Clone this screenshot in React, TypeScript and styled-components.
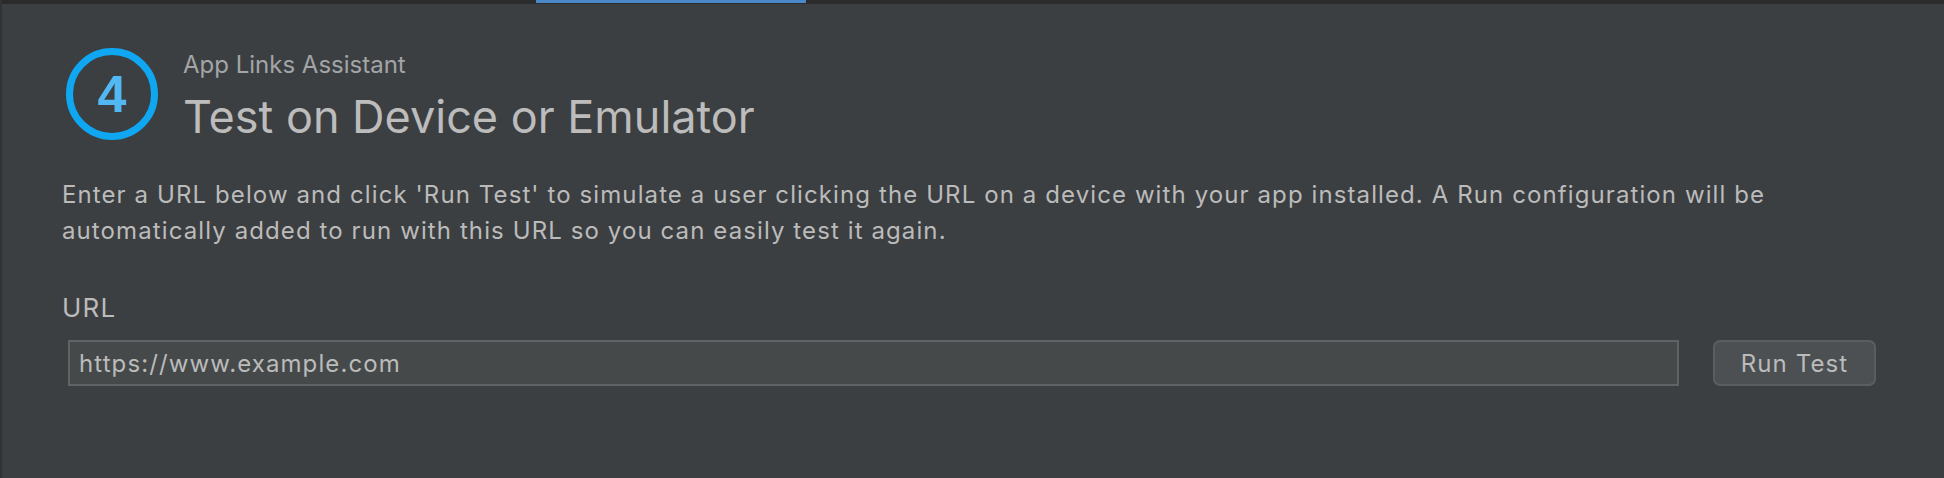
import React from 'react'
import styled, { createGlobalStyle } from 'styled-components'

const GlobalStyle = createGlobalStyle`
  html, body {
    margin: 0;
    padding: 0;
    background: #3c3f41;
  }
  body {
    font-family: Inter, 'Liberation Sans', sans-serif;
    color: #bbbbbb;
  }
`

const Page = styled.div`
  display: flex;
  flex-direction: column;
  height: 478px;
  background: #3c3f41;
  border-left: 2px solid #313335;
  box-sizing: border-box;
`

const TabStrip = styled.div`
  display: flex;
  height: 4px;
  background: #2b2b2b;
  padding-left: 534px;
`

const ActiveTab = styled.div`
  width: 270px;
  height: 3px;
  background: #4a88c7;
`

const Content = styled.div`
  display: flex;
  flex-direction: column;
  padding: 44px 68px 0 60px;
`

const Header = styled.div`
  display: flex;
  align-items: flex-start;
  gap: 25px;
  padding-left: 4px;
`

const StepBadge = styled.div`
  display: flex;
  align-items: center;
  justify-content: center;
  width: 92px;
  height: 92px;
  box-sizing: border-box;
  border: 7px solid #0fa6f2;
  border-radius: 50%;
  color: #52b8f4;
  font-family: 'Liberation Sans', sans-serif;
  font-weight: 700;
  font-size: 52px;
  line-height: 1;
`

const Titles = styled.div`
  display: flex;
  flex-direction: column;
  padding-top: 3px;
`

const Subtitle = styled.div`
  font-size: 24px;
  line-height: 28px;
  color: #a3a5a7;
`

const Title = styled.div`
  font-size: 45px;
  line-height: 54px;
  margin-top: 11px;
  color: #bcbcbc;
`

const Description = styled.p`
  margin: 33px 0 0;
  font-size: 24px;
  line-height: 36px;
  letter-spacing: 1.1px;
  white-space: nowrap;
  color: #bbbbbb;
`

const FieldLabel = styled.div`
  margin-top: 44px;
  font-size: 26px;
  line-height: 30px;
  letter-spacing: 1.2px;
  color: #bbbbbb;
`

const FieldRow = styled.div`
  display: flex;
  align-items: center;
  gap: 34px;
  margin-top: 17px;
  padding-left: 6px;
`

const UrlInput = styled.input`
  flex: 1;
  height: 46px;
  box-sizing: border-box;
  padding: 0 9px;
  background: #45494a;
  border: 2px solid #606264;
  color: #bbbbbb;
  font-family: Inter, 'Liberation Sans', sans-serif;
  font-size: 24px;
  letter-spacing: 1.1px;
  outline: none;
`

const Button = styled.button`
  width: 163px;
  height: 46px;
  background: #4c5052;
  border: 2px solid #5b5e60;
  border-radius: 7px;
  color: #bbbbbb;
  font-family: Inter, 'Liberation Sans', sans-serif;
  font-size: 24px;
  letter-spacing: 1.1px;
`

export default function App() {
  return (
    <>
      <GlobalStyle />
      <Page>
        <TabStrip>
          <ActiveTab />
        </TabStrip>
        <Content>
          <Header>
            <StepBadge>4</StepBadge>
            <Titles>
              <Subtitle>App Links Assistant</Subtitle>
              <Title>Test on Device or Emulator</Title>
            </Titles>
          </Header>
          <Description>
            Enter a URL below and click 'Run Test' to simulate a user clicking the URL on a device with your app
            installed. A Run configuration will be
            <br />
            automatically added to run with this URL so you can easily test it again.
          </Description>
          <FieldLabel>URL</FieldLabel>
          <FieldRow>
            <UrlInput defaultValue="https://www.example.com" />
            <Button>Run Test</Button>
          </FieldRow>
        </Content>
      </Page>
    </>
  )
}
